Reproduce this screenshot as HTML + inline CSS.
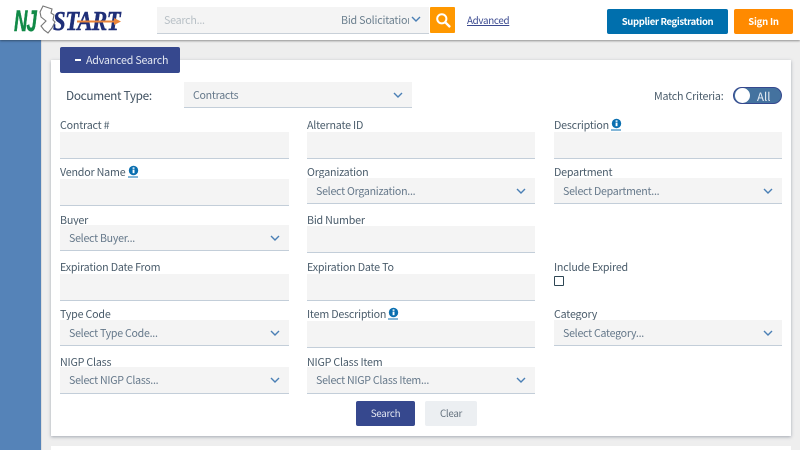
<!DOCTYPE html>
<html lang="en"><head><meta charset="utf-8"><title>NJSTART</title>
<style>
html,body{margin:0;padding:0;width:800px;height:450px;overflow:hidden;background:#eee}
body{position:relative;font-family:"Noto Sans CJK JP","Liberation Sans",sans-serif;color:#4a5c6b;font-size:10.7px}
.a{position:absolute}
.t{position:absolute;white-space:nowrap;line-height:16px;font-size:10.7px;letter-spacing:-.2px;margin-top:1px}
.f{position:absolute;background:#f4f4f4;border-bottom:1px solid #c3ced9;width:229px;box-sizing:border-box}
.s{color:#65788a;font-size:10.6px;line-height:25px;padding-left:9px;padding-top:1px;white-space:nowrap;letter-spacing:-.25px}
</style></head><body>
<div class="a" style="left:41px;top:40px;width:759px;height:410px;background:#eee;border-left:1px solid #ddd;box-sizing:border-box"></div>
<div class="a" style="left:0;top:40px;width:41px;height:410px;background:#5583b8"></div>
<div class="a" style="left:0;top:0;width:800px;height:40px;background:#fff;box-shadow:0 1px 2px rgba(0,0,0,.4)"></div>

<!-- logo -->
<div class="a" style="left:14px;top:7px;font:italic bold 30px/30px 'Liberation Sans',sans-serif;color:#118a47;letter-spacing:-1.5px;transform:scaleX(.62);transform-origin:0 0;-webkit-text-stroke:.5px #118a47">NJ</div>
<svg class="a" style="left:38px;top:4px" width="20" height="30" viewBox="0 0 20 30"><path d="M5 2 L14 5 L13 9 L16 11 L15 16 L17 18 L14 24 L10 29 L6 26 L3 22 L8 17 L3 13 L2 8 Z" fill="#fff" stroke="#777" stroke-width="1.1"/></svg>
<div class="a" style="left:53px;top:7px;font:italic bold 27px/28px 'Liberation Serif',serif;color:#1f2f78;letter-spacing:-.5px;transform:scaleX(.84);transform-origin:0 0;-webkit-text-stroke:.5px #1f2f78">START</div>
<svg class="a" style="left:76px;top:17px" width="46" height="9" viewBox="0 0 46 9"><path d="M1 3.5 L38 3.5 L38 1 L45 4.5 L38 8 L38 5.5 L1 5.5 Z" fill="#e8843a"/></svg>

<!-- search -->
<div class="a" style="left:157px;top:7px;width:272px;height:27px;background:#f4f4f4;border-bottom:1px solid #c8d0d8;box-sizing:border-box"></div>
<div class="t" style="left:164px;top:12px;color:#b8c0c6;letter-spacing:-.25px">Search...</div>
<div class="a" style="left:341px;top:13px;width:68px;overflow:hidden;white-space:nowrap;color:#6b7f8e;line-height:16px;letter-spacing:-.2px">Bid Solicitation</div>
<svg class="a" style="left:411px;top:16px" width="10" height="7" viewBox="0 0 10 7"><path d="M1 1 L5 5 L9 1" fill="none" stroke="#4a7fb5" stroke-width="1.4"/></svg>
<div class="a" style="left:430px;top:7px;width:25px;height:26px;background:#ff9800;border-radius:1px"></div>
<svg class="a" style="left:435px;top:12px" width="16" height="16" viewBox="0 0 16 16"><circle cx="6.8" cy="6.8" r="4.6" fill="none" stroke="#fff" stroke-width="2"/><path d="M10.3 10.3 L14.4 14.4" stroke="#fff" stroke-width="2.4" stroke-linecap="round"/></svg>
<div class="t" style="left:467px;top:12px;margin-top:0;font-size:9.8px;color:#3b4a90;text-decoration:underline;letter-spacing:-.3px">Advanced</div>

<div class="a" style="left:607px;top:9px;width:121px;height:25px;background:#006fad;border-radius:2px;color:#fff;font-weight:700;font-size:9.5px;line-height:25px;text-align:center;letter-spacing:-.35px">Supplier Registration</div>
<div class="a" style="left:734px;top:9px;width:59px;height:25px;background:#ff8a00;border-radius:2px;color:#fff;font-weight:700;font-size:9.5px;line-height:25px;text-align:center;letter-spacing:-.2px">Sign In</div>

<!-- panels -->
<div class="a" style="left:51px;top:60px;width:740px;height:376px;background:#fff;box-shadow:0 1px 3px rgba(90,100,120,.5)"></div>
<div class="a" style="left:51px;top:446px;width:740px;height:10px;background:#fff"></div>
<div class="a" style="left:60px;top:47px;width:120px;height:26px;background:#36488e;border-radius:2px"></div>
<div class="a" style="left:75px;top:59px;width:6px;height:2px;background:#fff"></div>
<div class="t" style="left:86px;top:52px;color:#e4e8f2">Advanced Search</div>

<div class="t" style="left:66px;top:88px;margin-top:0;font-size:11.8px;color:#3f5060;letter-spacing:-.3px">Document Type:</div>
<div class="f s" style="left:184px;top:82px;width:228px;height:26px">Contracts</div>
<svg class="a" style="left:393px;top:92px" width="10" height="7" viewBox="0 0 10 7"><path d="M1 1 L5 5 L9 1" fill="none" stroke="#4a7fb5" stroke-width="1.4"/></svg>
<div class="t" style="left:654px;top:88px;color:#4a5c6b">Match Criteria:</div>
<div class="a" style="left:733px;top:87px;width:49px;height:17px;background:#44729f;border:1px solid #36488e;border-radius:9px;box-sizing:border-box"></div>
<div class="a" style="left:735px;top:88px;width:15px;height:15px;background:#fff;border-radius:50%"></div>
<div class="t" style="left:757px;top:89px;margin-top:0;color:#e8eef5;font-size:11.5px;letter-spacing:0">All</div>

<!-- row 1 -->
<div class="t" style="left:60px;top:117px">Contract #</div>
<div class="f" style="left:60px;top:132px;height:27px"></div>
<div class="t" style="left:307px;top:117px">Alternate ID</div>
<div class="f" style="left:307px;top:132px;width:228px;height:27px"></div>
<div class="t" style="left:554px;top:117px">Description</div>
<div class="f" style="left:554px;top:132px;width:228px;height:27px"></div>
<!-- row 2 -->
<div class="t" style="left:60px;top:164px">Vendor Name</div>
<div class="f" style="left:60px;top:179px;height:27px"></div>
<div class="t" style="left:307px;top:164px">Organization</div>
<div class="f s" style="left:307px;top:178px;width:228px;height:26px;line-height:26px">Select Organization...</div>
<div class="t" style="left:554px;top:164px">Department</div>
<div class="f s" style="left:554px;top:178px;width:228px;height:26px;line-height:26px">Select Department...</div>
<!-- row 3 -->
<div class="t" style="left:60px;top:212px">Buyer</div>
<div class="f s" style="left:60px;top:225px;height:26px">Select Buyer...</div>
<div class="t" style="left:307px;top:212px">Bid Number</div>
<div class="f" style="left:307px;top:226px;width:228px;height:27px"></div>
<!-- row 4 -->
<div class="t" style="left:60px;top:259px">Expiration Date From</div>
<div class="f" style="left:60px;top:274px;height:27px"></div>
<div class="t" style="left:307px;top:259px">Expiration Date To</div>
<div class="f" style="left:307px;top:274px;width:228px;height:27px"></div>
<div class="t" style="left:554px;top:259px">Include Expired</div>
<div class="a" style="left:554px;top:276px;width:8px;height:8px;border:1.3px solid #2e4654;border-radius:1px"></div>
<!-- row 5 -->
<div class="t" style="left:60px;top:306px">Type Code</div>
<div class="f s" style="left:60px;top:320px;height:26px">Select Type Code...</div>
<div class="t" style="left:307px;top:306px">Item Description</div>
<div class="f" style="left:307px;top:321px;width:228px;height:27px"></div>
<div class="t" style="left:554px;top:306px">Category</div>
<div class="f s" style="left:554px;top:320px;width:228px;height:26px">Select Category...</div>
<!-- row 6 -->
<div class="t" style="left:60px;top:354px">NIGP Class</div>
<div class="f s" style="left:60px;top:367px;height:27px">Select NIGP Class...</div>
<div class="t" style="left:307px;top:354px">NIGP Class Item</div>
<div class="f s" style="left:307px;top:367px;width:228px;height:27px">Select NIGP Class Item...</div>

<!-- chevrons -->
<svg class="a" style="left:0;top:0" width="800" height="450" viewBox="0 0 800 450" fill="none" stroke="#4a7fb5" stroke-width="1.4">
<path d="M517 189 L521 193 L525 189"/>
<path d="M764 189 L768 193 L772 189"/>
<path d="M271 236 L275 240 L279 236"/>
<path d="M271 331 L275 335 L279 331"/>
<path d="M764 331 L768 335 L772 331"/>
<path d="M271 378 L275 382 L279 378"/>
<path d="M517 378 L521 382 L525 378"/>
</svg>

<!-- info icons -->
<svg class="a" style="left:611px;top:118px" width="11" height="13" viewBox="0 0 11 13"><circle cx="5.5" cy="5.5" r="4.7" fill="#0a6fb0"/><rect x="4.6" y="4.6" width="1.9" height="3.6" fill="#fff"/><rect x="4.6" y="2.4" width="1.9" height="1.4" fill="#fff"/><rect x="0" y="11.5" width="10" height="1" fill="#0a6fb0"/></svg>
<svg class="a" style="left:128px;top:165px" width="11" height="13" viewBox="0 0 11 13"><circle cx="5.5" cy="5.5" r="4.7" fill="#0a6fb0"/><rect x="4.6" y="4.6" width="1.9" height="3.6" fill="#fff"/><rect x="4.6" y="2.4" width="1.9" height="1.4" fill="#fff"/><rect x="0" y="11.5" width="10" height="1" fill="#0a6fb0"/></svg>
<svg class="a" style="left:388px;top:307px" width="11" height="13" viewBox="0 0 11 13"><circle cx="5.5" cy="5.5" r="4.7" fill="#0a6fb0"/><rect x="4.6" y="4.6" width="1.9" height="3.6" fill="#fff"/><rect x="4.6" y="2.4" width="1.9" height="1.4" fill="#fff"/><rect x="0" y="11.5" width="10" height="1" fill="#0a6fb0"/></svg>

<!-- buttons -->
<div class="a" style="left:356px;top:401px;width:59px;height:25px;background:#36488e;border-radius:2px;color:#e4e8f2;font-size:9.8px;line-height:25px;text-align:center;letter-spacing:-.3px">Search</div>
<div class="a" style="left:425px;top:401px;width:52px;height:25px;background:#eceff2;border-radius:2px;color:#66737f;font-size:9.8px;line-height:25px;text-align:center;letter-spacing:-.3px">Clear</div>
</body></html>
